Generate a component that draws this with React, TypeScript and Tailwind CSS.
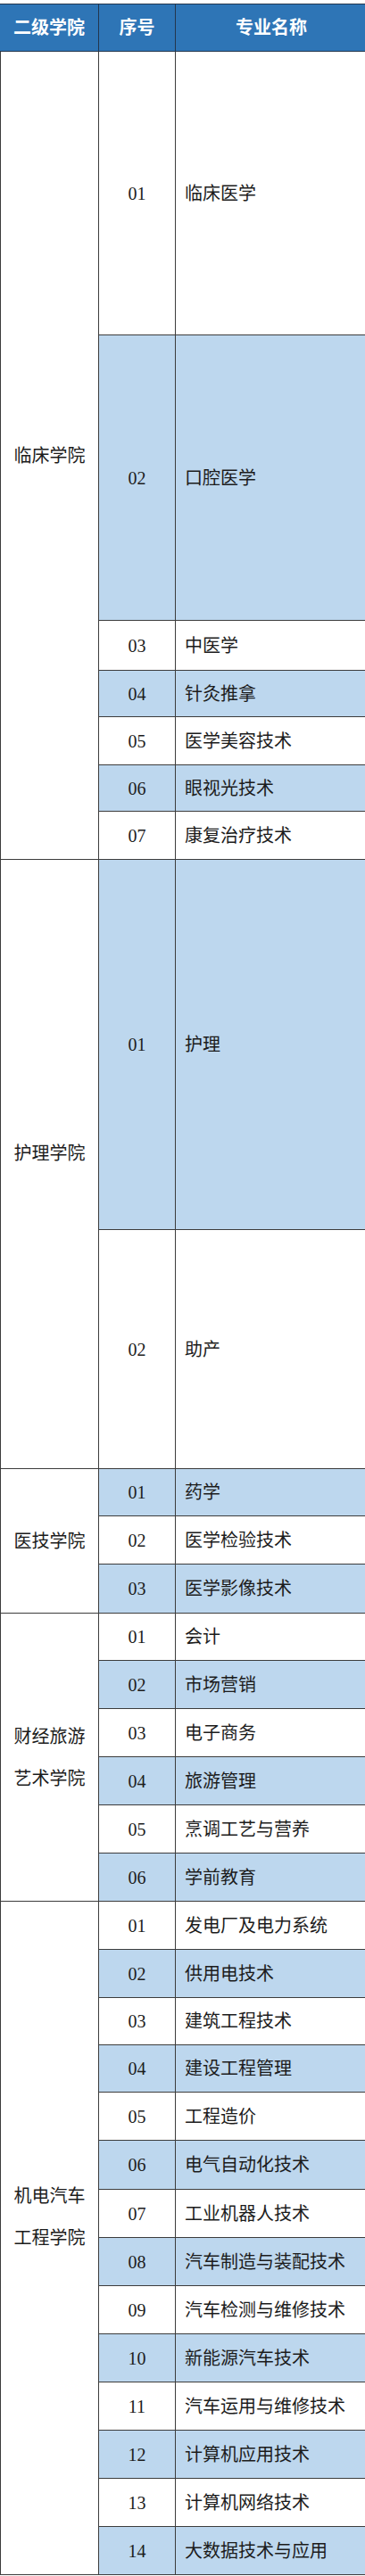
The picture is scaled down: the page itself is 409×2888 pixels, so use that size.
type Major = { no: string; name: string; h: number };
type Group = { college: string[]; labelPad?: string; majors: Major[] };

const groups: Group[] = [
  {
    college: ["临床学院"],
    majors: [
      { no: "01", name: "临床医学", h: 318 },
      { no: "02", name: "口腔医学", h: 320 },
      { no: "03", name: "中医学", h: 56 },
      { no: "04", name: "针灸推拿", h: 52 },
      { no: "05", name: "医学美容技术", h: 54 },
      { no: "06", name: "眼视光技术", h: 52 },
      { no: "07", name: "康复治疗技术", h: 54 },
    ],
  },
  {
    college: ["护理学院"],
    labelPad: "pb-[24px]",
    majors: [
      { no: "01", name: "护理", h: 415 },
      { no: "02", name: "助产", h: 268 },
    ],
  },
  {
    college: ["医技学院"],
    majors: [
      { no: "01", name: "药学", h: 53 },
      { no: "02", name: "医学检验技术", h: 54 },
      { no: "03", name: "医学影像技术", h: 55 },
    ],
  },
  {
    college: ["财经旅游", "艺术学院"],
    majors: [
      { no: "01", name: "会计", h: 53 },
      { no: "02", name: "市场营销", h: 54 },
      { no: "03", name: "电子商务", h: 54 },
      { no: "04", name: "旅游管理", h: 54 },
      { no: "05", name: "烹调工艺与营养", h: 54 },
      { no: "06", name: "学前教育", h: 54 },
    ],
  },
  {
    college: ["机电汽车", "工程学院"],
    labelPad: "pb-[48px]",
    majors: [
      { no: "01", name: "发电厂及电力系统", h: 54 },
      { no: "02", name: "供用电技术", h: 54 },
      { no: "03", name: "建筑工程技术", h: 53 },
      { no: "04", name: "建设工程管理", h: 53 },
      { no: "05", name: "工程造价", h: 54 },
      { no: "06", name: "电气自动化技术", h: 55 },
      { no: "07", name: "工业机器人技术", h: 54 },
      { no: "08", name: "汽车制造与装配技术", h: 54 },
      { no: "09", name: "汽车检测与维修技术", h: 54 },
      { no: "10", name: "新能源汽车技术", h: 54 },
      { no: "11", name: "汽车运用与维修技术", h: 54 },
      { no: "12", name: "计算机应用技术", h: 54 },
      { no: "13", name: "计算机网络技术", h: 54 },
      { no: "14", name: "大数据技术与应用", h: 54 },
    ],
  },
];

export default function App() {
  let idx = 0;

  return (
    <div className="w-[409px] overflow-hidden bg-white pt-1 font-['Liberation_Serif','Noto_Sans_CJK_SC',serif] text-[20px] text-[#1c1c1c]">
      <div className="w-[411px]">
        {/* 表头 */}
        <div className="flex h-[54px] border-y border-[#23364d] bg-[#2e75b6] font-bold text-white">
          <div className="flex w-[111px] items-center justify-center border-r border-[#23364d]">二级学院</div>
          <div className="flex w-[86px] items-center justify-center border-r border-[#23364d]">序号</div>
          <div className="flex flex-1 items-center justify-center">专业名称</div>
        </div>

        {groups.map((g) => (
          <div key={g.college.join("")} className="flex">
            <div
              className={`flex w-[111px] flex-col items-center justify-center gap-[27px] border-b border-l border-r border-[#3c3c3c] ${g.labelPad ?? ""}`}
            >
              {g.college.map((line) => (
                <span key={line} className="leading-none">
                  {line}
                </span>
              ))}
            </div>
            <div className="flex flex-1 flex-col">
              {g.majors.map((m) => {
                const shaded = idx++ % 2 === 1;
                return (
                  <div
                    key={m.no}
                    style={{ height: m.h }}
                    className={`flex border-b border-[#3c3c3c] ${shaded ? "bg-[#bdd7ee]" : "bg-white"}`}
                  >
                    <div className="flex w-[86px] items-center justify-center border-r border-[#3c3c3c]">{m.no}</div>
                    <div className="flex flex-1 items-center pl-[10px]">{m.name}</div>
                  </div>
                );
              })}
            </div>
          </div>
        ))}
      </div>
    </div>
  );
}
